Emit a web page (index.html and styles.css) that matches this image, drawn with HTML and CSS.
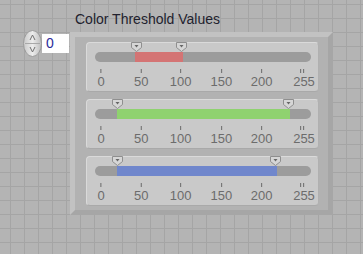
FILE: index.html
```html
<!DOCTYPE html>
<html>
<head>
<meta charset="utf-8">
<link rel="stylesheet" href="styles.css">
</head>
<body>
<div class="panel">
  <div class="title">Color Threshold Values</div>
  <div class="row">
    <div class="index">
      <div class="knob">
        <svg width="19" height="27" viewBox="0 0 19 27">
          <defs>
            <linearGradient id="kg" x1="0" y1="0" x2="1" y2="0">
              <stop offset="0" stop-color="#c9c9c9"/>
              <stop offset="0.5" stop-color="#ececec"/>
              <stop offset="1" stop-color="#bdbdbd"/>
            </linearGradient>
          </defs>
          <ellipse cx="9.5" cy="13.5" rx="9" ry="13" fill="url(#kg)" stroke="#9a9a9a"/>
          <line x1="2" y1="13.5" x2="17" y2="13.5" stroke="#a8a8a8"/>
          <path d="M9.5 5 L7 10 M9.5 5 L12 10" stroke="#707070" fill="none"/>
          <path d="M9.5 22 L7 17 M9.5 22 L12 17" stroke="#707070" fill="none"/>
        </svg>
      </div>
      <div class="display">0</div>
    </div>
    <div class="frame">
      <div class="well">
        <div class="slider">
          <div class="track">
            <div class="fill red" style="left:40px;width:48px"></div>
            <span class="thumb" style="left:41px"><svg width="11" height="10" viewBox="0 0 11 10"><path d="M0.5 0.5 H10.5 V5.5 L5.5 9.5 L0.5 5.5 Z" fill="#d6d6d6" stroke="#8f8f8f"/><path d="M3.5 3 H7.5 L5.5 5.5 Z" fill="#666"/></svg></span>
            <span class="thumb" style="left:86px"><svg width="11" height="10" viewBox="0 0 11 10"><path d="M0.5 0.5 H10.5 V5.5 L5.5 9.5 L0.5 5.5 Z" fill="#d6d6d6" stroke="#8f8f8f"/><path d="M3.5 3 H7.5 L5.5 5.5 Z" fill="#666"/></svg></span>
          </div>
          <div class="scale">
            <span class="tk" style="left:6px"><i></i>0</span>
            <span class="tk" style="left:46.3px"><i></i>50</span>
            <span class="tk" style="left:85.7px"><i></i>100</span>
            <span class="tk" style="left:126.3px"><i></i>150</span>
            <span class="tk" style="left:166.7px"><i></i>200</span>
            <span class="tk" style="left:209px"><i class="dbl"></i>255</span>
          </div>
        </div>
        <div class="slider">
          <div class="track">
            <div class="fill green" style="left:21.7px;width:173px"></div>
            <span class="thumb" style="left:22.3px"><svg width="11" height="10" viewBox="0 0 11 10"><path d="M0.5 0.5 H10.5 V5.5 L5.5 9.5 L0.5 5.5 Z" fill="#d6d6d6" stroke="#8f8f8f"/><path d="M3.5 3 H7.5 L5.5 5.5 Z" fill="#666"/></svg></span>
            <span class="thumb" style="left:193.7px"><svg width="11" height="10" viewBox="0 0 11 10"><path d="M0.5 0.5 H10.5 V5.5 L5.5 9.5 L0.5 5.5 Z" fill="#d6d6d6" stroke="#8f8f8f"/><path d="M3.5 3 H7.5 L5.5 5.5 Z" fill="#666"/></svg></span>
          </div>
          <div class="scale">
            <span class="tk" style="left:6px"><i></i>0</span>
            <span class="tk" style="left:46.3px"><i></i>50</span>
            <span class="tk" style="left:85.7px"><i></i>100</span>
            <span class="tk" style="left:126.3px"><i></i>150</span>
            <span class="tk" style="left:166.7px"><i></i>200</span>
            <span class="tk" style="left:209px"><i class="dbl"></i>255</span>
          </div>
        </div>
        <div class="slider">
          <div class="track">
            <div class="fill blue" style="left:21.7px;width:160.6px"></div>
            <span class="thumb" style="left:22.3px"><svg width="11" height="10" viewBox="0 0 11 10"><path d="M0.5 0.5 H10.5 V5.5 L5.5 9.5 L0.5 5.5 Z" fill="#d6d6d6" stroke="#8f8f8f"/><path d="M3.5 3 H7.5 L5.5 5.5 Z" fill="#666"/></svg></span>
            <span class="thumb" style="left:180px"><svg width="11" height="10" viewBox="0 0 11 10"><path d="M0.5 0.5 H10.5 V5.5 L5.5 9.5 L0.5 5.5 Z" fill="#d6d6d6" stroke="#8f8f8f"/><path d="M3.5 3 H7.5 L5.5 5.5 Z" fill="#666"/></svg></span>
          </div>
          <div class="scale">
            <span class="tk" style="left:6px"><i></i>0</span>
            <span class="tk" style="left:46.3px"><i></i>50</span>
            <span class="tk" style="left:85.7px"><i></i>100</span>
            <span class="tk" style="left:126.3px"><i></i>150</span>
            <span class="tk" style="left:166.7px"><i></i>200</span>
            <span class="tk" style="left:209px"><i class="dbl"></i>255</span>
          </div>
        </div>
      </div>
    </div>
  </div>
</div>
</body>
</html>
```
FILE: styles.css
```css
html, body {
  margin: 0;
  padding: 0;
  width: 363px;
  height: 254px;
  overflow: hidden;
}
body {
  background-color: #b4b4b4;
  background-image:
    linear-gradient(to right, #a5a5a5 1px, transparent 1px),
    linear-gradient(to bottom, #a5a5a5 1px, transparent 1px);
  background-size: 14px 14px;
  background-position: 10px 4px;
  font-family: "Liberation Sans", Arial, sans-serif;
}
.panel {
  padding-top: 11px;
}
.title {
  margin-left: 75px;
  font-size: 14px;
  line-height: 17px;
  height: 17px;
  color: #22222e;
}
.row {
  display: flex;
  align-items: flex-start;
  margin-top: 2px;
}
.index {
  display: flex;
  align-items: center;
  margin-left: 23px;
  width: 47px;
  height: 27px;
}
.knob {
  width: 19px;
  height: 27px;
}
.knob svg { display: block; }
.display {
  width: 27px;
  height: 19px;
  background: #ffffff;
  font-size: 14px;
  line-height: 19px;
  color: #2c2c9a;
  padding-left: 4px;
  box-sizing: border-box;
}
.frame {
  margin-top: 2px;
  width: 263px;
  height: 183px;
  box-sizing: border-box;
  border: 5px solid;
  border-color: #c2c2c2 #a6a6a6 #a6a6a6 #c2c2c2;
}
.well {
  height: 100%;
  box-sizing: border-box;
  background: #b2b2b2;
  padding: 5px 9px 0 11px;
  display: flex;
  flex-direction: column;
  gap: 7px;
}
.slider {
  height: 50px;
  box-sizing: border-box;
  background: #c9c9c9;
  border: 1px solid #dadada;
  border-bottom-color: #a9a9a9;
  border-right-color: #b0b0b0;
  border-radius: 4px;
  padding: 9px 0 0 8px;
}
.track {
  position: relative;
  width: 216px;
  height: 10px;
  border-radius: 5px;
  background: #9c9c9c;
}
.fill {
  position: absolute;
  top: 0;
  height: 10px;
}
.red { background: #d47474; }
.green { background: #8fd26f; }
.blue { background: #7087cc; }
.thumb {
  position: absolute;
  top: -10px;
  width: 11px;
  height: 10px;
  margin-left: -5.5px;
}
.thumb svg { display: block; }
.scale {
  position: relative;
  height: 26px;
  width: 216px;
}
.tk {
  position: absolute;
  top: 7px;
  transform: translateX(-50%);
  font-size: 13px;
  line-height: 13px;
  color: #6c6c6c;
  display: flex;
  flex-direction: column;
  align-items: center;
}
.tk i {
  display: block;
  width: 1px;
  height: 4px;
  background: #6a6a6a;
  margin-bottom: 2px;
}
.tk i.dbl {
  width: 4px;
  background: none;
  border-left: 1px solid #6a6a6a;
  border-right: 1px solid #6a6a6a;
  box-sizing: border-box;
  margin-left: -3px;
}
```
